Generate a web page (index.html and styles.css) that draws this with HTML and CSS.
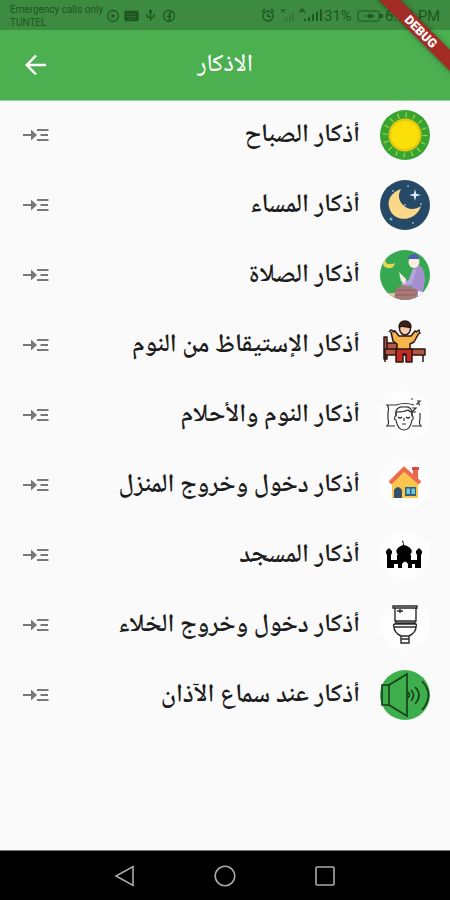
FILE: index.html
```html
<!DOCTYPE html>
<html lang="ar">
<head>
<meta charset="utf-8">
<title>الاذكار</title>
<link rel="stylesheet" href="styles.css">
</head>
<body>
<svg class="defs" width="0" height="0"><defs>
<symbol id="open" viewBox="0 0 26 18"><path d="M0 9h10M14 4h11.500M17.500 9H25M14 14h11.500" fill="none" stroke="#777" stroke-width="2"/><path d="M8 3.500 14 9l-6 5.500z" fill="#777"/></symbol>
</defs></svg>
<div class="phone">
<div class="status">
<div class="carrier"><span>Emergency calls only</span><span>TUNTEL</span></div>
<svg class="sys-left" viewBox="0 0 70 14" width="70" height="14" fill="none" stroke="#1f5423" stroke-width="1.300"><circle cx="7" cy="7" r="5.500"/><path d="M5.500 4.500 9.500 7l-4 2.500z" fill="#1f5423" stroke="none"/><rect x="19" y="2.500" width="13" height="9" rx="1" fill="#1f5423"/><path d="M21 5h9M21 7.500h9M23 10h5" stroke="#3d8b40" stroke-width=".8" stroke-dasharray="1.500 1"/><path d="M44.500 2v10M41 5v2.500l3.500 2M48 5v2.500l-3.500 2M43 3.500 44.500 1 46 3.500"/><circle cx="63" cy="7" r="5.500"/><path d="M63.500 12V5.500q0-2 2-2M61 7.500h4.500" stroke-width="1.600"/></svg>
<svg class="sys-right" viewBox="0 0 62 16" width="62" height="16" fill="none" stroke="#1f5423" stroke-width="1.300"><circle cx="7" cy="9" r="5"/><path d="M7 6v3.500h3M1 5l3-3M13 5l-3-3"/><path d="M20 2.500l4 3M24 2.500l-4 3M39 2.500v3M41 5V2l3 3.500"/><path d="M23 14v-2M26 14v-4M29 14V8M32 14V5" stroke="#347738" stroke-width="2"/><path d="M44 14v-2M48 14v-4M52 14V7M56 14V5M60 14V2.500" stroke-width="2"/></svg>
<span class="pct">31%</span>
<svg class="batt" viewBox="0 0 27 12" width="27" height="12"><rect x="1" y="1" width="21" height="10" rx="1" fill="none" stroke="#1f5423"/><path d="M22.500 4H26v4h-3.500z" fill="#1f5423"/><path d="M8 6h3l1-2 5 2-5 2-1-2" fill="#1f5423" stroke="#1f5423"/></svg>
<span class="clock">6:52 PM</span>
</div>
<header class="bar">
<svg class="back" viewBox="0 0 22 22" width="22" height="22" fill="none" stroke="#fff" stroke-width="2.500"><path d="M21 11H2M11 1.500 1.800 11l9.200 9.500"/></svg>
<h1 dir="rtl">الاذكار</h1>
</header>
<div class="debug"><span>DEBUG</span></div>
<main class="list" dir="rtl">
<div class="row"><svg class="pic" viewBox="0 0 50 50"><circle cx="25" cy="25" r="25" fill="#37a432"/><circle cx="25" cy="25" r="20" fill="none" stroke="#a9d03a" stroke-width="5" stroke-dasharray="1.200 6.650"/><circle cx="25" cy="25" r="16.500" fill="#e6c80c"/><circle cx="25" cy="25" r="14" fill="#fbdf09"/></svg><span class="label">أذكار الصباح</span><svg class="open"><use href="#open"/></svg></div>
<div class="row"><svg class="pic" viewBox="0 0 50 50"><circle cx="25" cy="25" r="25" fill="#254966"/><path d="M21 9C12 12 7 19 9 27c2 9 11 14 20 11 6-2 10-6 12-12-6 4-13 4-18-1-5-5-5-11-2-16z" fill="#fbd78a"/><path d="M35 9l1.200 4.800L41 15l-4.800 1.200L35 21l-1.200-4.800L29 15l4.800-1.200z" fill="#d9efff"/><g fill="#8bb3c8"><circle cx="11" cy="39" r="1.500"/><circle cx="25" cy="25" r="1"/><circle cx="41" cy="24" r="1"/><circle cx="13" cy="11" r="1"/><circle cx="33" cy="43" r="1"/><circle cx="28" cy="6" r="1"/></g></svg><span class="label">أذكار المساء</span><svg class="open"><use href="#open"/></svg></div>
<div class="row"><svg class="pic" viewBox="0 0 50 50"><clipPath id="c"><circle cx="25" cy="25" r="25"/></clipPath><g clip-path="url(#c)"><path fill="#36a852" d="M0 0h50v50H0z"/><path d="M6 8c-2 5 2 8 9 5-1 8-13 6-12-1z" fill="#e7d854"/><path d="M0 43h15v7H0z" fill="#e4bd9c"/><path d="M35 16c6-3 10 4 10 14l-3 17H30l2-11-7 1-3-4 11-3z" fill="#a48fd0"/><path d="M35 19l-5 13-8 2" fill="none" stroke="#b7a6dc" stroke-width="4"/><path d="m19 22 7 7-1 5-4-3z" fill="#f7ece4"/><ellipse cx="34" cy="12" rx="5.500" ry="6" fill="#faeee2"/><path d="M28 9c1-7 12-6 11 0z" fill="#4a61ae"/><path d="M16 38l8-3 14 5-2 10H14z" fill="#a97878"/><path d="M16 40h20M15 45h21" stroke="#8e6060"/><path d="m38 41 5 1-5 8z" fill="#fff"/></g></svg><span class="label">أذكار الصلاة</span><svg class="open"><use href="#open"/></svg></div>
<div class="row"><svg class="pic" viewBox="0 0 50 50" stroke="#291714" stroke-width="1.500" stroke-linejoin="round"><path d="M4 17h3v22H4zM7 23h11v7H7z" fill="#b65543"/><path d="M5 29h40v6H5zM5 35v7M43 35v7" fill="#b65543"/><path d="m11 12 4-1 4 5h12l4-5 4 2-5 9-4 2v6H17v-6l-4-3z" fill="#f6b44c"/><path d="M16 29h16v13h-6v-8h-3v8h-7z" fill="#c52a25"/><ellipse cx="25" cy="8.500" rx="5.500" ry="6.500" fill="#f7cba5"/><path d="M19 7c0-8 12-8 12 0-4 1-8-2-12 0z" fill="#3b211b"/><path d="m9 12 2-2 4 2M36 12l3-2 1 4" fill="#f7cba5"/></svg><span class="label">أذكار الإستيقاظ من النوم</span><svg class="open"><use href="#open"/></svg></div>
<div class="row"><svg class="pic" viewBox="0 0 50 50" fill="none" stroke="#333" stroke-width="1.200"><circle cx="25" cy="25" r="25" fill="#fdfdfd" stroke="none"/><path d="M15 36H7c2-2 2-4 1-7v-7c1-3 1-5-1-7h9c6-2 12-2 18 0M32 36h9c-2-2-2-4-1-7v-6M39 15h1"/><path d="M16 24v-2q8 0 12-2 2 2 4 2v4c2 0 1 4 0 4-1 6-4 10-8 10s-7-4-8-10c-2 0-2-4 0-4z" fill="#fff"/><path d="M16 26v-5q2-5 8-4 7-1 8 5v4M18 27q2 2 4 0M26 27q2 2 4 0M24 28v3M22 34h4M32 18h4l-4 4h4M37 11h3l-3 3h3M31 9h2"/></svg><span class="label">أذكار النوم والأحلام</span><svg class="open"><use href="#open"/></svg></div>
<div class="row"><svg class="pic" viewBox="0 0 50 50"><circle cx="25" cy="25" r="25" fill="#fdfdfd"/><path d="M33 8h5v14h-5z" fill="#e96550"/><path d="M32 7h7v3h-7z" fill="#d84c42"/><path d="M12 22 24 9l14 14v15H12z" fill="#fbc64e"/><path d="m10 23 14-14 16 14" fill="none" stroke="#ee6c4c" stroke-width="4"/><path d="M14 38V30q4-6 8 0v8z" fill="#35516b"/><path d="M25 27h11v9H25z" fill="#355e7a"/><path d="M26.500 28.500h3.500V34h-3.500zM31.500 28.500H35V34h-3.500z" fill="#66cada"/></svg><span class="label">أذكار دخول وخروج المنزل</span><svg class="open"><use href="#open"/></svg></div>
<div class="row"><svg class="pic" viewBox="0 0 50 50"><circle cx="25" cy="25" r="25" fill="#fdfdfd"/><path d="M7 38V25l-1-2v-2l3-3 3 3v2l-1 2v5h6v-5h1c-4-5 0-8 5-10v-2l-1-1 1-2 1 5c7 2 10 6 6 10h1v5h6v-5l-1-2v-2l3-3 3 3v2l-1 2v13h-6v-4h-3v4h-4v-4q-3-5-6 0v4h-4v-4h-4v4z"/></svg><span class="label">أذكار المسجد</span><svg class="open"><use href="#open"/></svg></div>
<div class="row"><svg class="pic" viewBox="0 0 50 50" fill="none" stroke="#282828" stroke-width="1.400"><circle cx="25" cy="25" r="25" fill="#fdfdfd" stroke="none"/><path d="M13 6h24v2H13zM15 8v13h21V8M16 21v2h19v-2M14 24h22q1 1 0 3H14q-1-2 0-3M14 27c0 4 3 7 7 9h8c4-2 7-5 7-9M21 36v7h8v-7M21 39h8M17 11h6M20 9v4"/></svg><span class="label">أذكار دخول وخروج الخلاء</span><svg class="open"><use href="#open"/></svg></div>
<div class="row"><svg class="pic" viewBox="0 0 50 50" fill="none" stroke="#153d1b" stroke-width="1.600"><circle cx="25" cy="25" r="25" fill="#3dae4b" stroke="none"/><path d="M2 15h7v20H2zM9 15 27 4v42L9 35M27 21q5 4 0 8M31 20q5 5 0 11M35 17q8 8 0 17M42 11q13 14 0 29"/></svg><span class="label">أذكار عند سماع الآذان</span><svg class="open"><use href="#open"/></svg></div>
</main>
<nav class="nav"><svg viewBox="0 0 22 22"><path d="M19 1.500v19L2 11z"/></svg><svg viewBox="0 0 22 22"><circle cx="11" cy="11" r="9.800"/></svg><svg viewBox="0 0 22 22"><rect x="2" y="2" width="18" height="18" rx="1"/></svg></nav>
</div>
</body>
</html>
```
FILE: styles.css
```css
* { box-sizing: border-box; }
body { margin: 0; font-family: Roboto, sans-serif; background: #fafafa; }
.defs { position: absolute; }
.phone { position: relative; width: 450px; height: 900px; overflow: hidden; display: flex; flex-direction: column; }
.status { height: 30px; background: #3d8b40; display: flex; align-items: center; padding-left: 10px; color: #1f5423; flex: none; white-space: nowrap; }
.carrier { display: flex; flex-direction: column; font-size: 10px; line-height: 13px; width: 96px; padding-top: 2px; letter-spacing: -.02px; }
.sys-left { margin-top: 1px; flex: none; }
.sys-right { margin-left: 85px; flex: none; }
.pct { font-size: 15px; margin: 2px 0 0 1px; width: 32px; }
.batt { margin: 1px 0 0 1px; flex: none; }
.clock { font-size: 15px; margin: 2px 0 0 1px; }
.bar { height: 71px; flex: none; background: #4caf50; border-bottom: 1px solid #9bd19d; display: grid; grid-template-columns: 1fr auto 1fr; align-items: center; padding: 0 25px; }
.bar h1 { margin: 0; padding-top: 1px; font: 500 24.500px/30px "Noto Naskh Arabic", "DejaVu Sans", sans-serif; color: #fff; }
.debug { position: absolute; left: 366px; top: 24px; width: 110px; height: 15px; background: #a32d26; color: #fff; transform: rotate(45deg); text-align: center; font: 900 12.500px/15px Roboto, sans-serif; box-shadow: 0 0 5px #0006; }
.list { flex: 1; margin-top: -1px; }
.row { height: 70px; display: flex; align-items: center; padding: 0 20px 0 23px; }
.pic { width: 50px; height: 50px; flex: none; }
.label { margin-right: 20px; padding-bottom: 1px; font: 600 25.500px/32px "Noto Naskh Arabic UI", "Noto Naskh Arabic", "DejaVu Sans", sans-serif; color: #1c1c1c; white-space: nowrap; }
.open { width: 26px; height: 18px; margin-right: auto; flex: none; }
.nav { height: 50px; flex: none; background: #000; border-top: 1px solid #777; display: flex; justify-content: center; align-items: center; gap: 78px; }
.nav svg { width: 22px; height: 22px; fill: none; stroke: #aaa; stroke-width: 1.600; }
```
